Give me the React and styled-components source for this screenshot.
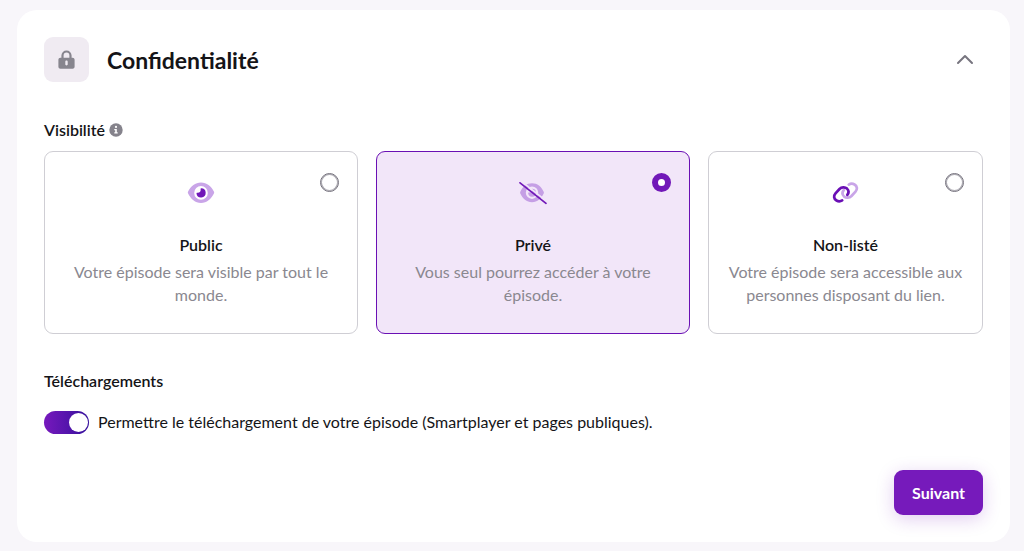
import React, { useState } from "react";
import styled, { createGlobalStyle } from "styled-components";

const GlobalStyle = createGlobalStyle`
  * {
    box-sizing: border-box;
  }
  body {
    margin: 0;
    background: #f8f6fa;
    color: #141417;
    font-family: Lato, "Liberation Sans", sans-serif;
    font-size: 16px;
    line-height: 24px;
  }
`;

const Page = styled.main`
  padding: 10px 14px 9px 17px;
`;

const Panel = styled.section`
  display: flex;
  flex-direction: column;
  padding: 27px;
  border-radius: 20px;
  background: #fff;
`;

const Header = styled.header`
  display: flex;
  align-items: center;
  gap: 18px;
  margin-bottom: 36px;
`;

const IconTile = styled.div`
  display: flex;
  align-items: center;
  justify-content: center;
  width: 45px;
  height: 45px;
  border-radius: 9px;
  background: #f0ebf2;
`;

const Title = styled.h1`
  flex: 1;
  margin: 0;
  font-size: 23px;
  line-height: 28px;
  font-weight: 700;
`;

const CollapseButton = styled.button`
  display: flex;
  align-items: center;
  justify-content: center;
  width: 36px;
  height: 36px;
  padding: 0;
  border: 0;
  background: none;
  cursor: pointer;
`;

const Label = styled.h2`
  display: flex;
  align-items: center;
  gap: 4px;
  margin: 0;
  font-size: 16px;
  line-height: 24px;
  font-weight: 600;
`;

const Options = styled.div`
  display: grid;
  grid-template-columns: 314fr 314fr 275fr;
  gap: 18px;
  margin: 9px 0 35px;
`;

const Option = styled.label`
  position: relative;
  display: flex;
  flex-direction: column;
  align-items: center;
  padding: 30px 17px 27px;
  border: 1px solid ${(p) => (p.$selected ? "#6a10b4" : "#cfced4")};
  border-radius: 9px;
  background: ${(p) => (p.$selected ? "#f2e6f9" : "#fff")};
  text-align: center;
  cursor: pointer;
`;

const Radio = styled.input`
  appearance: none;
  position: absolute;
  top: 21px;
  right: 18px;
  width: 19px;
  height: 19px;
  margin: 0;
  border: 1px solid #74717c;
  box-shadow: inset 0 0 0 1px #a9a7af;
  border-radius: 50%;
  background: #fff;
  cursor: pointer;

  &:checked {
    border: 6px solid #7118b8;
    box-shadow: none;
  }
`;

const OptionIcon = styled.span`
  display: flex;
  align-items: center;
  height: 23px;
  margin-bottom: 28px;
`;

const OptionName = styled.span`
  font-weight: 600;
`;

const OptionText = styled.span`
  margin-top: 3px;
  color: #8a8890;
  line-height: 23px;
`;

const SwitchRow = styled.label`
  display: flex;
  align-items: center;
  gap: 9px;
  margin-top: 17px;
  cursor: pointer;
`;

const Switch = styled.input`
  appearance: none;
  display: flex;
  flex: none;
  width: 45px;
  height: 23px;
  margin: 0;
  padding: 2px 1px;
  border-radius: 12px;
  background: #c9c7ce;
  cursor: pointer;

  &::before {
    content: "";
    width: 19px;
    height: 19px;
    border-radius: 50%;
    background: #fff;
  }

  &:checked {
    justify-content: flex-end;
    background: linear-gradient(90deg, #7719bd, #35109c);
  }
`;

const NextButton = styled.button`
  align-self: flex-end;
  height: 45px;
  margin-top: 36px;
  padding: 0 18px;
  border: 0;
  border-radius: 9px;
  background: #761abb;
  box-shadow: 0 4px 18px rgba(118, 26, 187, 0.22);
  color: #fff;
  font: inherit;
  font-weight: 700;
  cursor: pointer;
`;

const LockIcon = () => (
  <svg width="17" height="19" viewBox="0 0 17 19" fill="none" aria-hidden="true">
    <path d="M4.500 9V5.500a4 4 0 0 1 8 0V9" stroke="#87858e" strokeWidth="2.200" />
    <path
      fillRule="evenodd"
      d="M2.400 7.800h12.200c1.100 0 2 .9 2 2v7c0 1.100-.9 2-2 2H2.400c-1.100 0-2-.9-2-2v-7c0-1.100.9-2 2-2zM8.500 10.500c-.7 0-1.200.5-1.200 1.200v2.500c0 .7.5 1.200 1.200 1.200s1.200-.5 1.200-1.200v-2.500c0-.7-.5-1.200-1.200-1.200z"
      fill="#87858e"
    />
  </svg>
);

const ChevronIcon = () => (
  <svg width="18" height="12" viewBox="0 0 18 12" fill="none" aria-hidden="true">
    <path d="M2 9l7-7 7 7" stroke="#77757f" strokeWidth="2" strokeLinecap="round" strokeLinejoin="round" />
  </svg>
);

const InfoIcon = () => (
  <svg width="14" height="14" viewBox="0 0 14 14" aria-hidden="true">
    <circle cx="7" cy="7" r="6.700" fill="#85838c" />
    <circle cx="7" cy="3.900" r="1.100" fill="#fff" />
    <path d="M5.300 6h2.500v3.300h.9v1.300H5.300V9.300h.9V7.300h-.9z" fill="#fff" />
  </svg>
);

const EyeIcon = () => (
  <svg width="28" height="23" viewBox="0 0 28 23" aria-hidden="true">
    <path
      fillRule="evenodd"
      d="M14 .6c5.800 0 10.100 3.500 12.900 9 .4.800.4 1.300 0 2-2.800 5.600-7.100 9.500-12.900 9.500S3.900 17.200 1.100 11.600c-.4-.7-.4-1.200 0-2C3.900 4.100 8.200.6 14 .6zm0 3.500a6.800 6.800 0 1 0 0 13.600 6.800 6.800 0 0 0 0-13.600z"
      fill="#c9a5e8"
    />
    <path
      d="M14.200 6.300a4.600 4.600 0 1 1-4.700 5.100c-.1-.6.200-.8.700-.7 2.200.4 3.900-1.200 3.400-3.500-.1-.5.100-.9.600-.9z"
      fill="#7118b8"
    />
  </svg>
);

const EyeOffIcon = () => (
  <svg width="28" height="23" viewBox="0 0 28 23" fill="none" aria-hidden="true">
    <path
      fillRule="evenodd"
      d="M13 1.200c5.400 0 9.400 3.300 11.700 8.500.3.700.3 1.200 0 1.900C22.400 16.800 18.400 20.200 13 20.200S3.600 16.800 1.300 11.600c-.3-.7-.3-1.200 0-1.900C3.600 4.500 7.600 1.200 13 1.200zm0 3.300a6.200 6.200 0 1 0 0 12.400 6.200 6.200 0 0 0 0-12.400z"
      fill="#c59fe5"
    />
    <path
      d="M13.200 6.700a4 4 0 1 1-4.100 4.400c0-.5.200-.7.600-.6 2 .4 3.500-1 3-3-.1-.5.100-.8.500-.8z"
      fill="#c59fe5"
    />
    <path d="M2.500-.6l26 20.500" stroke="#f2e6f9" strokeWidth="1.500" />
    <path d="M1 .8l26 20.500" stroke="#7118b8" strokeWidth="1.700" strokeLinecap="round" />
  </svg>
);

const LINK_HALF =
  "M10.200 18.400C8.600 19.400 6.300 19.500 4.500 18.500C1.700 17 1.400 13.700 3.500 11.300L7.500 7C9.600 4.900 13 4.700 15 6.600C16.800 8.400 16.800 11 15.300 12.900";

const LinkIcon = () => (
  <svg width="27" height="23" viewBox="0 0 27 23" fill="none" strokeWidth="2.700" strokeLinecap="round" aria-hidden="true">
    <path d={LINK_HALF} transform="rotate(180 13.500 10.500)" stroke="#c9a5e8" />
    <path d={LINK_HALF} stroke="#6a0fb5" />
  </svg>
);

const OPTIONS = [
  { id: "public", name: "Public", text: "Votre épisode sera visible par tout le monde.", Icon: EyeIcon },
  { id: "private", name: "Privé", text: "Vous seul pourrez accéder à votre épisode.", Icon: EyeOffIcon },
  { id: "unlisted", name: "Non-listé", text: "Votre épisode sera accessible aux personnes disposant du lien.", Icon: LinkIcon },
];

export default function App() {
  const [visibility, setVisibility] = useState("private");
  const [downloads, setDownloads] = useState(true);
  const [open, setOpen] = useState(true);

  return (
    <Page>
      <GlobalStyle />
      <Panel>
        <Header>
          <IconTile>
            <LockIcon />
          </IconTile>
          <Title>Confidentialité</Title>
          <CollapseButton type="button" aria-label="Confidentialité" aria-expanded={open} onClick={() => setOpen(!open)}>
            <ChevronIcon />
          </CollapseButton>
        </Header>
        {open && (
          <>
            <Label id="visibility">
              Visibilité
              <InfoIcon />
            </Label>
            <Options role="radiogroup" aria-labelledby="visibility">
              {OPTIONS.map(({ id, name, text, Icon }) => (
                <Option key={id} $selected={visibility === id}>
                  <Radio
                    type="radio"
                    name="visibility"
                    value={id}
                    checked={visibility === id}
                    onChange={() => setVisibility(id)}
                  />
                  <OptionIcon>
                    <Icon />
                  </OptionIcon>
                  <OptionName>{name}</OptionName>
                  <OptionText>{text}</OptionText>
                </Option>
              ))}
            </Options>
            <Label>Téléchargements</Label>
            <SwitchRow>
              <Switch type="checkbox" checked={downloads} onChange={(e) => setDownloads(e.target.checked)} />
              Permettre le téléchargement de votre épisode (Smartplayer et pages publiques).
            </SwitchRow>
            <NextButton type="button">Suivant</NextButton>
          </>
        )}
      </Panel>
    </Page>
  );
}
